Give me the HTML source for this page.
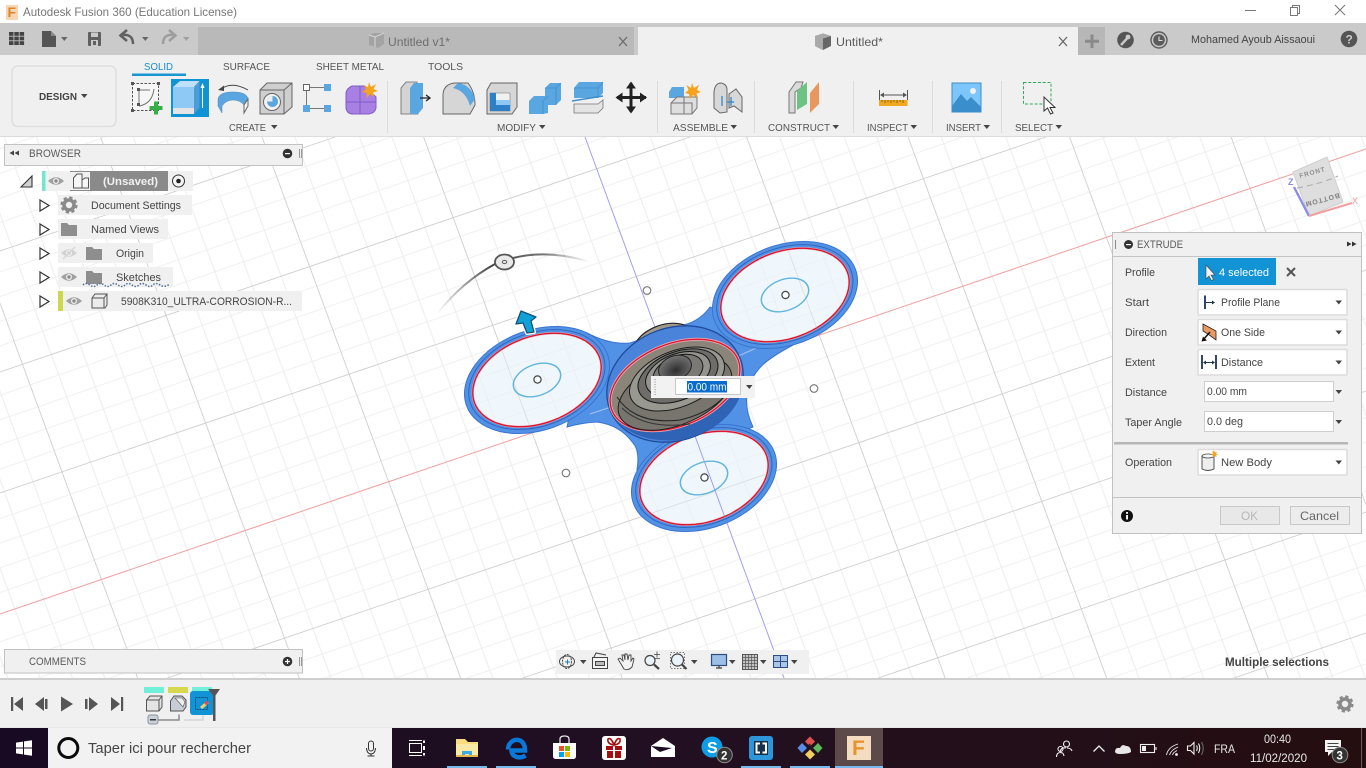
<!DOCTYPE html>
<html lang="fr"><head><meta charset="utf-8"><title>Autodesk Fusion 360</title>
<style>
html,body{margin:0;padding:0;width:1366px;height:768px;overflow:hidden;background:#fff}
svg{display:block}
text{font-family:"Liberation Sans",sans-serif;font-size:11px;fill:#555}
.w{fill:#f2f2f2}
.m{fill:#555;font-size:10.5px}
.l{fill:#5a5a5a;font-size:11px}
</style></head><body>
<svg width="1366" height="768" viewBox="0 0 1366 768" xmlns="http://www.w3.org/2000/svg">
<defs>
<pattern id="grid" patternUnits="userSpaceOnUse" width="100" height="100" patternTransform="matrix(1.435 -.495 .40 1.095 676 384)">
<path d="M20,0V100M40,0V100M60,0V100M80,0V100M0,20H100M0,40H100M0,60H100M0,80H100" stroke="#ececec" stroke-width=".65" fill="none"/>
</pattern>
<path id="maj" fill="none" stroke="#cfcfcf" stroke-width=".9" d="M0,303L138,679M100.600,137L299.500,679M262.100,137L461,679M423.600,137L622.500,679M746.600,137L945.500,679M908.100,137L1107,679M1069.600,137L1268.500,679M1231.100,137L1366,504.600M0,251L335,137M0,372L690,137M0,493L1046,137M164.500,679L1366,270M520,679L1366,391M875.400,679L1366,512M1231,679L1366,633"/>
<clipPath id="lobes">
<ellipse rx="66" ry="43" transform="translate(537 380) rotate(-20)"/>
<ellipse rx="66" ry="43" transform="translate(785 295) rotate(-20)"/>
<ellipse rx="66" ry="43" transform="translate(704 478) rotate(-20)"/>
</clipPath>
<linearGradient id="arc" gradientUnits="userSpaceOnUse" x1="437" y1="0" x2="590" y2="0">
<stop offset="0" stop-color="#555" stop-opacity="0"/><stop offset=".35" stop-color="#444"/><stop offset=".7" stop-color="#555" stop-opacity=".8"/><stop offset="1" stop-color="#777" stop-opacity="0"/>
</linearGradient>
<linearGradient id="tb" x1="0" y1="0" x2="1" y2="0"><stop offset="0" stop-color="#170a22"/><stop offset=".5" stop-color="#221022"/><stop offset="1" stop-color="#240e10"/></linearGradient>
<radialGradient id="hole" cx=".5" cy=".6" r=".6"><stop offset="0" stop-color="#2e2e2e"/><stop offset="1" stop-color="#777"/></radialGradient>
<path id="c" d="M0,0h6.5l-3.2,4z"/>
<path id="folder" d="M0,1h6l2,2h8v11H0z" fill="#8e8e8e"/>
<g id="eye"><path d="M0,5Q8,-2.5 16,5Q8,12.5 0,5z" fill="#a0a0a0"/><circle cx="8" cy="5" r="3" fill="#f0f0f0"/><circle cx="8" cy="5" r="1.7" fill="#8a8a8a"/></g>
<path id="tri" d="M0,0l9,5.5l-9,5.5z" fill="#fff" stroke="#333" stroke-width="1.2"/>
<g id="gear"><circle r="5" fill="none" stroke="#8a8a8a" stroke-width="3.6"/><circle r="7.3" fill="none" stroke="#8a8a8a" stroke-width="2.6" stroke-dasharray="3.2 2.53"/></g>
<g id="lobe">
<ellipse rx="75" ry="50" fill="#5292e6" stroke="#3a74d0" stroke-width="1"/>
<ellipse rx="70.500" ry="46.500" cy="-.5" fill="none" stroke="#3166bc" stroke-width="1"/>
<ellipse rx="66.500" ry="43.500" cy="0" fill="#eff7fd" stroke="#f0a8ae" stroke-width="2.200"/>
<ellipse rx="66.500" ry="43.500" cy="0" fill="none" stroke="#d9122e" stroke-width="1.300"/>
<ellipse rx="24.500" ry="15.500" fill="none" stroke="#62b6dc" stroke-width="1.300"/>
</g>
</defs>

<!-- viewport -->
<rect x="0" y="137" width="1366" height="542" fill="#fff"/>
<rect x="0" y="137" width="1366" height="542" fill="url(#grid)"/>
<use href="#maj"/>
<path d="M0,614L1366,149" stroke="#f0a0a0" stroke-width="1"/>
<path d="M585,137L784,678" stroke="#a0a0ee" stroke-width="1"/>

<!-- spinner body -->
<path d="M587,333Q610,345 630,343L690,323Q702,318 710,307L793,345Q765,360 758,370Q738,395 753,427L637,470Q640,450 633,443Q620,425 597,422Q580,423 567,427z" fill="#5292e6" stroke="#3a74d0" stroke-width="1"/>
<path d="M590,414L620,404M736,357L770,342" stroke="#a4c4f0" stroke-width="1"/>
<!-- bearing top -->
<ellipse cx="664" cy="345" rx="32" ry="20" transform="rotate(-20 664 345)" fill="#a09a8c" stroke="#222" stroke-width="1.200"/>
<use href="#lobe" transform="translate(537 380) rotate(-20)"/>
<use href="#lobe" transform="translate(785 295) rotate(-20)"/>
<use href="#lobe" transform="translate(704 478) rotate(-20)"/>
<g clip-path="url(#lobes)">
<rect x="430" y="230" width="440" height="310" fill="url(#grid)" opacity=".7"/>
<use href="#maj" opacity=".6"/>
<path d="M0,614L1366,149" stroke="#f0a0a0" stroke-width="1" opacity=".7"/>
<path d="M585,137L784,678" stroke="#a0a0ee" stroke-width="1"/>
</g>
<g fill="none" stroke="#62b6dc" stroke-width="1.300"><ellipse rx="24.500" ry="15.500" transform="translate(537 380) rotate(-20)"/><ellipse rx="24.500" ry="15.500" transform="translate(785 295) rotate(-20)"/><ellipse rx="24.500" ry="15.500" transform="translate(704 478) rotate(-20)"/></g>
<!-- center hub -->
<ellipse cx="675" cy="384" rx="70" ry="56" transform="rotate(-22 675 384)" fill="#4a84da" stroke="#1f4c9c" stroke-width="1.300"/>
<path d="M612,414Q632,444 680,440Q728,430 742,392L740,385Q700,428 640,428z" fill="#2e63b6"/>
<ellipse cx="675" cy="385" rx="68" ry="41" transform="rotate(-22 675 385)" fill="#8a8578" stroke="#eaa8b0" stroke-width="3"/>
<ellipse cx="675" cy="385" rx="68" ry="41" transform="rotate(-22 675 385)" fill="none" stroke="#d9122e" stroke-width="1.300"/>
<ellipse cx="675" cy="393" rx="60" ry="32" transform="rotate(-22 675 393)" fill="#77756e" stroke="#1e1e1e" stroke-width="1"/>
<ellipse cx="677" cy="379" rx="50" ry="28" transform="rotate(-22 677 379)" fill="#999890" stroke="#1a1a1a" stroke-width="1"/>
<ellipse cx="678" cy="376" rx="42" ry="24" transform="rotate(-22 678 376)" fill="#6e6d69" stroke="#151515" stroke-width="1"/>
<ellipse cx="678" cy="374" rx="34" ry="20" transform="rotate(-22 678 374)" fill="#94938e" stroke="#151515" stroke-width="1"/>
<ellipse cx="678" cy="372" rx="26" ry="16" transform="rotate(-22 678 372)" fill="#7a7976" stroke="#151515" stroke-width="1"/>
<ellipse cx="675" cy="368" rx="17" ry="12" transform="rotate(-22 675 368)" fill="url(#hole)" stroke="#222" stroke-width="1"/>
<path d="M617,397Q635,425 680,420Q722,410 735,380" fill="none" stroke="#222" stroke-width="1"/>
<path d="M622,408Q645,430 690,424" fill="none" stroke="#333" stroke-width="1"/>
<!-- lobe centres -->
<g fill="#fff" fill-opacity=".7" stroke="#444" stroke-width="1.200"><circle cx="537.500" cy="379.500" r="3.600"/><circle cx="785.500" cy="295" r="3.600"/><circle cx="704.500" cy="477.500" r="3.600"/></g>
<g fill="#fff" stroke="#777" stroke-width="1.100"><circle cx="647" cy="290.500" r="3.800"/><circle cx="814" cy="388.500" r="3.800"/><circle cx="566" cy="473" r="3.800"/></g>
<!-- manipulators -->
<path d="M437,314Q462,282 495,264M513,258Q548,249 590,262" fill="none" stroke="url(#arc)" stroke-width="2"/>
<ellipse cx="504.500" cy="262" rx="9.500" ry="7.500" fill="#e9e9e9" stroke="#555" stroke-width="1.800"/>
<ellipse cx="504.500" cy="262" rx="2.200" ry="1.600" fill="none" stroke="#555" stroke-width="1"/>
<path d="M521,311L536,317L531,321L534,332L527,333L523,323L516,324z" fill="#0fa0d8" stroke="#fff" stroke-width="4" stroke-linejoin="round"/>
<path d="M521,311L536,317L531,321L534,332L527,333L523,323L516,324z" fill="#0fa0d8" stroke="#14506e" stroke-width="1.300" stroke-linejoin="round"/>
<!-- inline input -->
<rect x="651" y="376" width="104" height="22" fill="#f2f2f2"/>
<path d="M655,379V396" stroke="#bbb" stroke-dasharray="1 1.500" stroke-width="2"/>
<rect x="675.500" y="378.500" width="65" height="16" fill="#fff" stroke="#c8c8c8"/>
<rect x="687" y="381" width="40" height="11.500" fill="#0a6ccc"/>
<text x="687.500" y="390.500" style="fill:#fff;font-size:11px" textLength="39" lengthAdjust="spacingAndGlyphs">0.00 mm</text>
<use href="#c" x="746" y="385" fill="#444"/>

<!-- viewcube -->
<path d="M1293,172L1327,157L1343,202L1309,216z" fill="#dedede" stroke="#cfcfcf"/>
<path d="M1297,188Q1320,184 1338,176" stroke="#aaa" stroke-width="1" fill="none" stroke-dasharray="6 4"/>
<text transform="translate(1300 178) rotate(-15)" style="font-size:6.500px;font-weight:bold;fill:#8e8e8e" textLength="26">FRONT</text>
<text transform="translate(1339 193) rotate(165)" style="font-size:7px;font-weight:bold;fill:#808080" textLength="35">BOTTOM</text>
<path d="M1294,187L1309,216" stroke="#8c8cea" stroke-width="2.400"/>
<path d="M1309,216L1352,203" stroke="#f0a0a0" stroke-width="2"/>
<text x="1288" y="185" style="font-size:9px;font-weight:bold;fill:#8a8ae8">Z</text>
<text x="1352" y="204" style="font-size:9px;fill:#f09a9a">X</text>

<!-- title bar -->
<rect x="0" y="0" width="1366" height="23" fill="#fff"/>
<rect x="6" y="5" width="12" height="15" fill="#f6d6b4"/>
<text x="7.500" y="17" style="font-size:14px;font-weight:bold;fill:#e0852a">F</text>
<text x="23" y="16" style="font-size:12px;fill:#777" textLength="214" lengthAdjust="spacingAndGlyphs">Autodesk Fusion 360 (Education License)</text>
<path d="M1245,10.500H1256" stroke="#777"/>
<path d="M1290.500,7.500h7v8h-7zM1292.500,7.500v-2h7v8h-2" fill="none" stroke="#777"/>
<path d="M1335,5L1345,15M1345,5L1335,15" stroke="#777"/>

<!-- tab bar -->
<rect x="0" y="23" width="1366" height="32" fill="#cacaca"/>
<rect x="198" y="27" width="436" height="28" fill="#b9b9b9"/>
<rect x="638" y="27" width="440" height="28" fill="#f0f0f0"/>
<rect x="1078" y="27" width="27" height="28" fill="#b7b7b7"/>
<g fill="#444"><rect x="9" y="32" width="4.500" height="3.800"/><rect x="14.300" y="32" width="4.500" height="3.800"/><rect x="19.600" y="32" width="4.500" height="3.800"/><rect x="9" y="36.600" width="4.500" height="3.800"/><rect x="14.300" y="36.600" width="4.500" height="3.800"/><rect x="19.600" y="36.600" width="4.500" height="3.800"/><rect x="9" y="41.200" width="4.500" height="3.800"/><rect x="14.300" y="41.200" width="4.500" height="3.800"/><rect x="19.600" y="41.200" width="4.500" height="3.800"/></g>
<path d="M42,31h9l5,5v11H42z" fill="#555"/><path d="M51,31v5h5" fill="#8a8a8a"/>
<use href="#c" x="61" y="37" fill="#666"/>
<rect x="88" y="32" width="13" height="14" rx="1" fill="#606060"/><rect x="91" y="32.500" width="7" height="4.500" fill="#cacaca"/><rect x="91" y="40" width="7" height="6" fill="#cacaca"/><rect x="93" y="41" width="3" height="4" fill="#606060"/>
<path d="M133,44Q133,34 123,35" fill="none" stroke="#606060" stroke-width="2.500"/><path d="M127,30L120.500,35.500L127,41" fill="none" stroke="#606060" stroke-width="2.500"/>
<use href="#c" x="142" y="37" fill="#666"/>
<path d="M163,44Q163,34 173,35" fill="none" stroke="#9d9d9d" stroke-width="2.500"/><path d="M169,30L175.500,35.500L169,41" fill="none" stroke="#9d9d9d" stroke-width="2.500"/>
<use href="#c" x="183" y="37" fill="#a0a0a0"/>
<path d="M369,35l5,-2l10,0l0,11l-6,4l-9,-3z" fill="#a3a3a3"/><path d="M369,35l6,2l9,-4M375,37v10" stroke="#d8d8d8" fill="none"/>
<text x="388" y="46" style="font-size:12px;fill:#6d6d6d" textLength="62" lengthAdjust="spacingAndGlyphs">Untitled v1*</text>
<path d="M619,37L627,46M627,37L619,46" stroke="#6a6a6a" stroke-width="1.300"/>
<path d="M815,36l8,-2.500l8,2.500v10l-8,4l-8,-4z" fill="#666"/><path d="M815,36l8,2.500l8,-2.500v0l-8,-2.500zM815,36v10l8,4v-11.500z" fill="#a9a9a9"/>
<text x="836" y="46" style="font-size:12px;fill:#5a5a5a" textLength="47" lengthAdjust="spacingAndGlyphs">Untitled*</text>
<path d="M1059,37L1067,46M1067,37L1059,46" stroke="#666" stroke-width="1.300"/>
<path d="M1092,34.500V48M1085,41.200H1099" stroke="#8a8a8a" stroke-width="3"/>
<circle cx="1125.500" cy="40" r="8.300" fill="#555"/><path d="M1121,45L1127,38.500" stroke="#cacaca" stroke-width="2.400"/><circle cx="1128" cy="37" r="2.400" fill="#cacaca"/>
<circle cx="1159" cy="40" r="8" fill="#cacaca" stroke="#5c5c5c" stroke-width="1.400"/><circle cx="1159" cy="40" r="5.800" fill="#5c5c5c"/><path d="M1159,36.500V40.500H1162.500" stroke="#ddd" stroke-width="1.100" fill="none"/>
<text x="1191" y="43" style="font-size:11px;fill:#444" textLength="124" lengthAdjust="spacingAndGlyphs">Mohamed Ayoub Aissaoui</text>
<circle cx="1349" cy="39" r="8.300" fill="#555"/><text x="1345.500" y="43.500" style="font-size:12px;font-weight:bold;fill:#cacaca">?</text>

<!-- toolbar -->
<rect x="0" y="55" width="1366" height="82" fill="#f0f0f0"/>
<path d="M0,136.500H1366" stroke="#dcdcdc"/>
<rect x="12" y="66" width="104" height="60.500" rx="6" fill="#f0f0f0" stroke="#dedede" stroke-width="1.500"/>
<text x="39" y="100" style="font-size:10.500px;font-weight:bold;fill:#444" textLength="38" lengthAdjust="spacingAndGlyphs">DESIGN</text>
<use href="#c" x="81" y="94" fill="#444"/>
<text x="144" y="70" style="font-size:10.500px;fill:#1a8ecb" textLength="29" lengthAdjust="spacingAndGlyphs">SOLID</text>
<rect x="132" y="73.500" width="54" height="2.500" fill="#1796d2"/>
<text x="223" y="70" class="m" textLength="47" lengthAdjust="spacingAndGlyphs">SURFACE</text>
<text x="316" y="70" class="m" textLength="68" lengthAdjust="spacingAndGlyphs">SHEET METAL</text>
<text x="428" y="70" class="m" textLength="35" lengthAdjust="spacingAndGlyphs">TOOLS</text>
<g stroke="#dcdcdc"><path d="M387.500,81V133M657.500,81V133M754.500,81V133M853.500,81V133M932.500,81V133M1001.500,81V133"/></g>
<g class="lbls">
<text x="229" y="131" class="m" textLength="37" lengthAdjust="spacingAndGlyphs">CREATE</text><use href="#c" x="271" y="125" fill="#444"/>
<text x="497" y="131" class="m" textLength="39" lengthAdjust="spacingAndGlyphs">MODIFY</text><use href="#c" x="539" y="125" fill="#444"/>
<text x="673" y="131" class="m" textLength="55" lengthAdjust="spacingAndGlyphs">ASSEMBLE</text><use href="#c" x="730.500" y="125" fill="#444"/>
<text x="768" y="131" class="m" textLength="62" lengthAdjust="spacingAndGlyphs">CONSTRUCT</text><use href="#c" x="832.500" y="125" fill="#444"/>
<text x="867" y="131" class="m" textLength="41" lengthAdjust="spacingAndGlyphs">INSPECT</text><use href="#c" x="910.500" y="125" fill="#444"/>
<text x="946" y="131" class="m" textLength="35" lengthAdjust="spacingAndGlyphs">INSERT</text><use href="#c" x="983.500" y="125" fill="#444"/>
<text x="1015" y="131" class="m" textLength="38" lengthAdjust="spacingAndGlyphs">SELECT</text><use href="#c" x="1055.500" y="125" fill="#444"/>
</g>
<!-- sketch icon -->
<rect x="132.500" y="83.500" width="26" height="27" fill="#f6f6f6" stroke="#555" stroke-dasharray="2.500 1.500"/>
<path d="M139,106Q152,104 154,89M139,90H150M139,90V105" fill="none" stroke="#777"/>
<g fill="#555"><rect x="131" y="82" width="3" height="3"/><rect x="157" y="82" width="3" height="3"/><rect x="131" y="109" width="3" height="3"/><rect x="137" y="88" width="3" height="3"/><rect x="137" y="103" width="3" height="3"/></g>
<path d="M156,101.500V114.500M149.500,108H162.500" stroke="#35b048" stroke-width="4"/>
<!-- extrude -->
<rect x="171" y="79" width="38" height="38" fill="#0f93d4"/>
<path d="M173,87L180,81H199.500L194,87z" fill="#bfe0fa"/>
<path d="M173,87H194V108H173z" fill="#8ec9f6"/>
<path d="M173,108H194V114H173z" fill="#e4e4e4"/>
<path d="M194,87L199.500,81V108L194,114z" fill="#4f9bd8"/>
<path d="M202.500,108V86" stroke="#fff"/><path d="M200.500,88L202.500,83L204.500,88z" fill="#fff"/>
<!-- revolve -->
<path d="M218,106V99Q219,92 233,92Q247,92 248,99V106L244,113V105Q240,100 233,100Q226,100 222,106V113z" fill="#5aa6e0" stroke="#4787bb" stroke-width=".5"/>
<path d="M244,105L248,99V106L244,113z" fill="#f4f4f4" stroke="#666"/>
<path d="M221,89Q232,81 248,90" fill="none" stroke="#444"/><path d="M218,90L224,85.500V91z" fill="#444"/>
<!-- hole -->
<path d="M260,90L267,83H292V107L284,114H260z" fill="#cfcfcf" stroke="#666"/>
<path d="M260,90H284V114M284,90L292,83" fill="none" stroke="#666"/>
<circle cx="272" cy="102" r="8.500" fill="#f2f2f2" stroke="#666"/><circle cx="272.500" cy="101.500" r="5.500" fill="#5aa6e0"/><path d="M272.500,101.500V96A5.500,5.500 0 0,0 267,101.500z" fill="#eee"/>
<!-- pattern -->
<path d="M310,87.500H324M306.500,91V105M310,108.500H324" stroke="#777"/>
<rect x="303.500" y="84.500" width="6" height="6" fill="#fff" stroke="#666"/>
<g fill="#5aa6e0"><rect x="324" y="84" width="7" height="7"/><rect x="303" y="105" width="7" height="7"/><rect x="324" y="105" width="7" height="7"/></g>
<!-- purple -->
<path d="M346,93Q347,88 352,86L364,86L376,97V108Q375,113 369,114H353Q347,114 346,108z" fill="#a87fe3" stroke="#7f5cc4"/>
<path d="M360,86V114M346,102H376" stroke="#7f5cc4"/>
<path d="M369,82L371,87L376,84L373.500,89L378,91L373,92.500L374.500,97L370,94L367,98L366.500,93L362,92L366,89L363.500,85L368,87z" fill="#f6a21c"/>
<!-- press pull -->
<path d="M401,114V88L406,82H417L418,114z" fill="#d4d4d4" stroke="#666" stroke-width=".8"/>
<path d="M410,114V88L414,83H423V108L418,114z" fill="#5aa6e0"/>
<path d="M420,98H429M426,95L430,98L426,101" fill="none" stroke="#222" stroke-width="1.300"/>
<!-- fillet -->
<path d="M443,114V94Q444,84 455,83L468,83Q475,92 475,105L470,114z" fill="#d6d6d6" stroke="#666"/>
<path d="M458,83Q471,85 475,99L470,106Q466,91 453,88z" fill="#5aa6e0"/>
<!-- shell -->
<path d="M487,90L491,83H517V107L512,114H487z" fill="#d6d6d6" stroke="#666"/>
<path d="M490,93H510V111H490z" fill="#f1f1f1" stroke="#666" stroke-width=".5"/>
<path d="M490,93h6v12h14v6H490z" fill="#2e7fc6"/><path d="M496,100h14v5H496z" fill="#8ec9f6"/>
<!-- combine -->
<path d="M545,88L550,83H561V100L556,105H545z" fill="#5aa6e0"/><path d="M529,101L534,96H548V113L543,114H529z" fill="#5aa6e0"/><path d="M545,88H556V105M556,88L561,83" fill="none" stroke="#3f8fce" stroke-width=".8"/>
<path d="M543,101V114M543,101L548,96" fill="none" stroke="#3f8fce" stroke-width=".8"/>
<!-- split -->
<path d="M574,88L579,82H603V93L598,98H574z" fill="#5aa6e0"/><path d="M574,88H598V98M598,88L603,82" fill="none" stroke="#3f8fce" stroke-width=".7"/>
<path d="M572,101L603,96" stroke="#3f8fce" stroke-width="1.600"/>
<path d="M574,104H598L603,100V108L598,113H574z" fill="#e4e4e4" stroke="#777" stroke-width=".8"/>
<!-- move -->
<path d="M631,83V112M617,97.500H646" stroke="#222" stroke-width="3"/>
<path d="M631,81.500L636,88.500H626zM631,113.500L636,106.500H626zM615.500,97.500L622.500,92.500V102.500zM647,97.500L640,92.500V102.500z" fill="#222"/>
<!-- assemble -->
<path d="M669,92L672,87H684V98H669z" fill="#5aa6e0"/>
<path d="M671,103L677,97H697V108L692,114H671z" fill="#dedede" stroke="#777"/>
<path d="M684,97V114M671,103H692V114" fill="none" stroke="#777"/>
<path d="M692,83L694,88L699,85L697,90L701,92L696.500,93.500L698,98L693,95L690,99L689,94L685,93L688.500,90L686.500,85L691,88z" fill="#f6a21c"/>
<!-- joint -->
<path d="M714,108V92Q715,83 721,83Q727,84 727,90V112L720,113z" fill="#d8d8d8" stroke="#666"/>
<path d="M729,94L736,89L742,97V112L734,106L729,108z" fill="#d8d8d8" stroke="#666"/>
<path d="M722,96V106M731,97V106M727,102H734" stroke="#3f8fce" stroke-width="1.400"/>
<!-- construct -->
<path d="M789,113V92L796,82H803L801,88L795,92V113z" fill="#dadada" stroke="#777"/>
<path d="M797,110V91L807,82V104z" fill="#6cc382"/>
<path d="M810,113V93L819,82V104z" fill="#e8985e"/>
<!-- inspect -->
<path d="M879.500,90V100M907.500,90V100M881,95H906" stroke="#555"/><path d="M880,95l4,-2.500v5zM907,95l-4,-2.500v5z" fill="#555"/>
<rect x="879" y="100" width="28.500" height="6" fill="#f0a820"/>
<path d="M882,100v2M885,100v3M888,100v2M891,100v3M894,100v2M897,100v3M900,100v2M903,100v3" stroke="#8a6010"/>
<!-- insert -->
<rect x="952" y="83" width="29" height="29" fill="#7cc6fb" stroke="#3e8cc6"/>
<circle cx="973" cy="91" r="3" fill="#f2f2f0"/>
<path d="M952,106L961,94L967,101L971,97L981,107V112H952z" fill="#3a8ecc"/>
<!-- select -->
<rect x="1023.500" y="82.500" width="27.500" height="21.500" fill="none" stroke="#2eaa55" stroke-dasharray="3 1.800"/>
<path d="M1044,97V111L1047.500,108L1050.500,114L1053,113L1050,107.500H1055z" fill="#fff" stroke="#333"/>

<!-- browser -->
<rect x="4.500" y="144.500" width="298" height="21" fill="#f0f0f0" stroke="#c2c2c2"/>
<path d="M14,150.500v5l-4.500,-2.500zM19,150.500v5l-4.500,-2.500z" fill="#444"/>
<text x="29" y="157" class="l" textLength="52" lengthAdjust="spacingAndGlyphs">BROWSER</text>
<circle cx="287.500" cy="153.500" r="4.800" fill="#333"/><rect x="285" y="153" width="5" height="1.200" fill="#fff"/>
<path d="M299.500,149V158M301.500,149V158" stroke="#999"/>
<!-- tree -->
<rect x="42" y="171" width="151" height="20" fill="#f0f0f0"/>
<rect x="42" y="171" width="3.500" height="20" fill="#74e6cf"/>
<rect x="70" y="171" width="98" height="20" fill="#8a8a8a"/>
<rect x="70" y="172" width="20" height="18" fill="#f0f0f0"/>
<path d="M21,187L32,176V187z" fill="#d0d0d0" stroke="#333" stroke-width="1.100"/>
<use href="#eye" x="48" y="176"/>
<path d="M73.500,188V178L77,174H82V188zM82,188V180L85,178H88.500V188z" fill="#f6f6f6" stroke="#555"/>
<text x="103" y="185" style="font-size:11px;font-weight:bold;fill:#f2f2f2" textLength="55" lengthAdjust="spacingAndGlyphs">(Unsaved)</text>
<circle cx="178.500" cy="181" r="6" fill="#f4f4f4" stroke="#333"/><circle cx="178.500" cy="181" r="2.300" fill="#222"/>
<rect x="58" y="195" width="134" height="20" fill="#f0f0f0"/>
<use href="#tri" x="40" y="200"/>
<use href="#gear" x="69" y="205"/>
<text x="91" y="209" style="font-size:11px;fill:#444" textLength="90" lengthAdjust="spacingAndGlyphs">Document Settings</text>
<rect x="58" y="219" width="110" height="20" fill="#f0f0f0"/>
<use href="#tri" x="40" y="224"/>
<use href="#folder" x="61" y="222"/>
<text x="91" y="233" style="font-size:11px;fill:#444" textLength="68" lengthAdjust="spacingAndGlyphs">Named Views</text>
<rect x="58" y="243" width="95" height="20" fill="#f0f0f0"/>
<use href="#tri" x="40" y="248"/>
<g opacity=".35"><use href="#eye" x="61" y="248"/><path d="M63,259L75,247" stroke="#aaa" stroke-width="1.500"/></g>
<use href="#folder" x="86" y="246"/>
<text x="116" y="257" style="font-size:11px;fill:#444" textLength="28" lengthAdjust="spacingAndGlyphs">Origin</text>
<rect x="58" y="267" width="115" height="20" fill="#f0f0f0"/>
<use href="#tri" x="40" y="272"/>
<use href="#eye" x="61" y="272"/>
<use href="#folder" x="86" y="270"/>
<text x="116" y="281" style="font-size:11px;fill:#444" textLength="45" lengthAdjust="spacingAndGlyphs">Sketches</text>
<path d="M83,285Q86,282 90,285T97,285T104,285T111,285T118,285T125,285T132,285T139,285T146,285T153,285T160,285T170,284" fill="none" stroke="#4f6f96" stroke-width="1.500" stroke-dasharray="1.500 1.500"/>
<rect x="58" y="291" width="244" height="20" fill="#f0f0f0"/>
<rect x="58" y="291" width="5" height="20" fill="#ccd84c"/>
<use href="#tri" x="40" y="296"/>
<use href="#eye" x="66" y="296"/>
<path d="M92,298L95,294H107V305L105,308H92z" fill="#ececec" stroke="#555"/><path d="M92,298H104V308M104,298L107,294" fill="none" stroke="#555"/>
<text x="121" y="305" style="font-size:11px;fill:#444" textLength="171" lengthAdjust="spacingAndGlyphs">5908K310_ULTRA-CORROSION-R...</text>

<!-- comments -->
<rect x="4.500" y="649.500" width="298" height="23.500" fill="#f0f0f0" stroke="#c2c2c2"/>
<text x="29" y="665" class="l" textLength="57" lengthAdjust="spacingAndGlyphs">COMMENTS</text>
<circle cx="287.500" cy="661.500" r="4.800" fill="#333"/><path d="M285,661.500H290M287.500,659V664" stroke="#fff" stroke-width="1.200"/>
<path d="M299.500,657V666M301.500,657V666" stroke="#999"/>

<!-- nav bar -->
<rect x="556" y="650" width="253" height="24" fill="#f0f0f0"/>
<ellipse cx="567" cy="661.500" rx="7.500" ry="5.500" fill="none" stroke="#444"/><ellipse cx="567" cy="661.500" rx="4.500" ry="7" fill="none" stroke="#444" stroke-dasharray="2 1"/><path d="M565,662h5M567.500,659.500v5" stroke="#2277cc"/>
<use href="#c" x="580" y="660" fill="#444"/>
<rect x="592.500" y="657.500" width="15" height="11" fill="#f4f4f4" stroke="#444"/><rect x="595.500" y="661.500" width="9" height="4" fill="#bbb" stroke="#444"/><path d="M594,657L596,653L606,655" fill="none" stroke="#444"/>
<path d="M621,664L618,659L620,658L623,661L622,655L624,655L625,660V654H627L628,660L629,655H631L631,661L633,658L634,659L632,667Q628,671 624,669z" fill="#f4f4f4" stroke="#444" stroke-width=".9"/>
<circle cx="650" cy="660.500" r="5" fill="#eaf3fa" stroke="#444" stroke-width="1.200"/><path d="M654,664.500L659,669" stroke="#444" stroke-width="2.200"/><path d="M654,654.500h6M657,651.500v6M654,658.500h6" stroke="#444" stroke-width=".8"/>
<rect x="670.500" y="652.500" width="14" height="16" fill="none" stroke="#777" stroke-dasharray="1.500 1.500"/><circle cx="677.500" cy="660" r="6" fill="#eaf3fa" stroke="#444" stroke-width="1.200"/><path d="M682,664.500L686.500,669" stroke="#444" stroke-width="2.200"/>
<use href="#c" x="691" y="660" fill="#444"/>
<rect x="711.500" y="654.500" width="15" height="11" fill="#9bbfe6" stroke="#2d4f80" stroke-width="1.200"/><path d="M716,668H722M719,666V668" stroke="#555" stroke-width="1.500"/>
<use href="#c" x="729" y="660" fill="#444"/>
<rect x="742.500" y="654.500" width="15" height="15" fill="#c4c4c4" stroke="#555"/><path d="M745.500,654.500V669.500M748.500,654.500V669.500M751.500,654.500V669.500M754.500,654.500V669.500M742.500,657.500H757.500M742.500,660.500H757.500M742.500,663.500H757.500M742.500,666.500H757.500" stroke="#555" stroke-width=".7"/>
<use href="#c" x="760" y="660" fill="#444"/>
<rect x="773.500" y="655.500" width="14" height="12" fill="#a9c6ea" stroke="#2d4f80"/><path d="M780.500,655.500V667.500M773.500,661.500H787.500" stroke="#2d4f80"/>
<use href="#c" x="791" y="660" fill="#444"/>

<text x="1225" y="666" style="font-size:11.500px;font-weight:bold;fill:#444" textLength="104" lengthAdjust="spacingAndGlyphs">Multiple selections</text>

<!-- extrude panel -->
<rect x="1112.500" y="232.500" width="249" height="301" fill="#f0f0f0" stroke="#c0c0c0"/>
<path d="M1113,256.500H1361M1113,497.500H1361" stroke="#c4c4c4"/>
<path d="M1115.500,240V249" stroke="#888"/>
<circle cx="1128.500" cy="244.500" r="4.500" fill="#333"/><rect x="1126" y="244" width="5" height="1.200" fill="#fff"/>
<text x="1137" y="248" class="l" textLength="46" lengthAdjust="spacingAndGlyphs">EXTRUDE</text>
<path d="M1347,241.500v5l4.500,-2.500zM1352,241.500v5l4.500,-2.500z" fill="#333"/>
<g style="font-size:11px">
<text x="1125" y="276" style="fill:#444" textLength="30" lengthAdjust="spacingAndGlyphs">Profile</text>
<text x="1125" y="306" style="fill:#444" textLength="24" lengthAdjust="spacingAndGlyphs">Start</text>
<text x="1125" y="336" style="fill:#444" textLength="42" lengthAdjust="spacingAndGlyphs">Direction</text>
<text x="1125" y="366" style="fill:#444" textLength="30" lengthAdjust="spacingAndGlyphs">Extent</text>
<text x="1125" y="396" style="fill:#444" textLength="42" lengthAdjust="spacingAndGlyphs">Distance</text>
<text x="1125" y="426" style="fill:#444" textLength="57" lengthAdjust="spacingAndGlyphs">Taper Angle</text>
<text x="1125" y="466" style="fill:#444" textLength="47" lengthAdjust="spacingAndGlyphs">Operation</text>
</g>
<rect x="1198" y="258" width="78" height="27" fill="#1193d5"/>
<path d="M1206,265V279L1209,276L1211.500,280.500L1213.500,279.500L1211,275H1215z" fill="#f4f4f4" stroke="#444" stroke-width=".6"/>
<text x="1219" y="276" style="font-size:11px;fill:#fff" textLength="50" lengthAdjust="spacingAndGlyphs">4 selected</text>
<path d="M1287,268L1295,276M1295,268L1287,276" stroke="#555" stroke-width="2"/>
<g fill="#fff" stroke="#dcdcdc" stroke-width="1.500">
<rect x="1198" y="289.500" width="149" height="25.500" rx="1"/><rect x="1198" y="319.500" width="149" height="25.500" rx="1"/><rect x="1198" y="349.500" width="149" height="25.500" rx="1"/><rect x="1198" y="449.500" width="149" height="25.500" rx="1"/>
</g>
<g fill="#fff" stroke="#cfcfcf"><rect x="1204.500" y="381.500" width="129" height="20"/><rect x="1204.500" y="411.500" width="129" height="20"/></g>
<path d="M1205,295.500V309" stroke="#1c3358" stroke-width="1.800"/><path d="M1206,302.500H1214" stroke="#1c3358"/><path d="M1215,302.500l-3,-2v4z" fill="#1c3358"/>
<text x="1221" y="306" style="font-size:11px;fill:#444" textLength="59" lengthAdjust="spacingAndGlyphs">Profile Plane</text>
<path d="M1203,324L1216,331L1216,340L1208,334L1203,331z" fill="#e89a60" stroke="#222" stroke-width=".8"/><path d="M1210,332L1203,340" stroke="#111" stroke-width="1.500"/><path d="M1201.500,341.500L1207,340.500L1203,336.500z" fill="#111"/>
<text x="1221" y="336" style="font-size:11px;fill:#444" textLength="44" lengthAdjust="spacingAndGlyphs">One Side</text>
<path d="M1202,355V369M1216,355V369" stroke="#1c3358" stroke-width="1.800"/><path d="M1204,362.500H1214" stroke="#1c3358"/><path d="M1203,362.500l3,-2v4zM1215,362.500l-3,-2v4z" fill="#1c3358"/>
<text x="1221" y="366" style="font-size:11px;fill:#444" textLength="42" lengthAdjust="spacingAndGlyphs">Distance</text>
<text x="1207" y="395" style="font-size:11px;fill:#444" textLength="40" lengthAdjust="spacingAndGlyphs">0.00 mm</text>
<text x="1207" y="425" style="font-size:11px;fill:#444" textLength="36" lengthAdjust="spacingAndGlyphs">0.0 deg</text>
<rect x="1114" y="442" width="234" height="2.500" fill="#b6b6b6"/>
<path d="M1202,456H1214V469Q1208,472 1202,469z" fill="#eee" stroke="#444" stroke-width=".9"/><ellipse cx="1208" cy="456" rx="6" ry="2" fill="#f8f8f8" stroke="#444" stroke-width=".8"/><path d="M1214,450.500l1,2l2,-1l-1,2l2,1l-2,.5l.5,2l-2,-1l-1.500,1.500l0,-2l-2,-1l2,-1l-.5,-2z" fill="#f6a21c"/>
<text x="1221" y="466" style="font-size:11px;fill:#444" textLength="51" lengthAdjust="spacingAndGlyphs">New Body</text>
<g fill="#444"><use href="#c" x="1335.500" y="300.500"/><use href="#c" x="1335.500" y="330.500"/><use href="#c" x="1335.500" y="360.500"/><use href="#c" x="1335.500" y="390"/><use href="#c" x="1335.500" y="420"/><use href="#c" x="1335.500" y="460.500"/></g>
<circle cx="1127" cy="516" r="6" fill="#111"/><rect x="1126.100" y="515" width="1.900" height="4.500" fill="#fff"/><rect x="1126.100" y="512" width="1.900" height="1.800" fill="#fff"/>
<rect x="1220.500" y="506.500" width="59" height="18" fill="#e8e8e8" stroke="#c8c8c8"/>
<text x="1241" y="520" style="font-size:12px;fill:#b8b8b8" textLength="17" lengthAdjust="spacingAndGlyphs">OK</text>
<rect x="1290.500" y="506.500" width="59" height="18" fill="#ececec" stroke="#c8c8c8"/>
<text x="1300" y="520" style="font-size:12px;fill:#666" textLength="39" lengthAdjust="spacingAndGlyphs">Cancel</text>

<!-- timeline -->
<rect x="0" y="678" width="1366" height="50" fill="#f0f0f0"/>
<rect x="0" y="678" width="1366" height="2" fill="#cfcfcf"/>
<rect x="0" y="727.500" width="1366" height="1" fill="#ddd"/>
<g fill="#555">
<rect x="11" y="697" width="2.200" height="14"/><path d="M23,697V711L14,704z"/>
<path d="M44,697V711L35,704z"/><rect x="45" y="699" width="2.500" height="10"/>
<path d="M61,696.500V711.500L73,704z"/>
<rect x="85" y="699" width="2.500" height="10"/><path d="M89,697V711L98,704z"/>
<path d="M111,697V711L120,704z"/><rect x="121" y="697" width="2.200" height="14"/>
</g>
<rect x="144" y="687" width="20" height="6" fill="#70f0d8"/>
<rect x="168" y="687" width="20" height="6" fill="#d6d84e"/>
<rect x="192" y="687" width="20" height="6" fill="#70f0d8"/>
<path d="M146.500,700L150,696H162V707L159,711H146.500z" fill="#e4e4e4" stroke="#555"/><path d="M146.500,700H159V711M159,700L162,696" fill="none" stroke="#555"/>
<path d="M170.500,701L174,696H182L186,700V707L183,711H170.500z" fill="#c8ccd4" stroke="#555"/><path d="M175,698H182L185,702L183,707Z" fill="#eee" stroke="#555" stroke-width=".6"/>
<rect x="190" y="691" width="24" height="24" rx="3" fill="#1193d5"/>
<rect x="195.500" y="697.500" width="12" height="12" fill="none" stroke="#14507c" stroke-dasharray="2 1"/>
<path d="M201,708L208,702" stroke="#f0d070" stroke-width="3"/><path d="M205,704L208,702" stroke="#e05050" stroke-width="3"/>
<path d="M208,689H220L215.500,695.500V721H213V695.500z" fill="#555"/>
<rect x="148" y="715" width="10" height="9" rx="2" fill="#ccd0d8" stroke="#8a94a4"/><rect x="150" y="719" width="6" height="1.500" fill="#333"/>
<path d="M158,720H179V714.500" fill="none" stroke="#8a8a8a" stroke-width="1.500"/>
<path d="M184,720H203V715" fill="none" stroke="#d6d6d6" stroke-width="1.500"/>
<use href="#gear" x="1345" y="704"/>

<!-- taskbar -->
<rect x="0" y="728" width="1366" height="40" fill="url(#tb)"/>
<path d="M16,742.600L23,741.600V747.500H16zM24,741.400L32,740.200V747.500H24zM16,748.500H23V754.400L16,753.400zM24,748.500H32V755.800L24,754.600z" fill="#fff"/>
<rect x="48" y="728" width="344" height="40" fill="#f2f2f2"/>
<circle cx="68.300" cy="748" r="9.500" fill="none" stroke="#0a0a0a" stroke-width="3"/>
<text x="88" y="753" style="font-size:14.500px;fill:#444" textLength="163" lengthAdjust="spacingAndGlyphs">Taper ici pour rechercher</text>
<rect x="368.500" y="741" width="5" height="10" rx="2.500" fill="none" stroke="#333"/><path d="M366.500,748Q367,754 371,754Q375,754 375.500,748M371,754V756M367.500,756H374.500" fill="none" stroke="#333"/>
<!-- task view -->
<path d="M409,740.500H422M409,755.500H422" stroke="#fff"/><rect x="409.500" y="743.500" width="12" height="9" fill="none" stroke="#fff"/><path d="M424,740.500V743M424,746V750M424,753V755.500" stroke="#fff" stroke-width="2"/>
<!-- active underlines -->
<g fill="#76b9ed"><rect x="447" y="766" width="40" height="2"/><rect x="496" y="766" width="40" height="2"/><rect x="741" y="766" width="40" height="2"/><rect x="790" y="766" width="40" height="2"/></g>
<rect x="835" y="728" width="48" height="40" fill="#5c4a4a"/><rect x="835" y="766" width="48" height="2" fill="#76b9ed"/>
<!-- explorer -->
<path d="M456,739H465L468,742H478V757H456z" fill="#f8dc80"/><path d="M456,744H478V757H456z" fill="#fbe9a6"/>
<path d="M462,757V751H472V757H469V754H465V757z" fill="#3fa9e6"/><rect x="456" y="755" width="22" height="2" fill="#e3b54c"/>
<!-- edge -->
<path d="M508,749.500C508,738 525,735 525,750.500H511.500C512,757.500 520,759 525.500,755.500" fill="none" stroke="#0a78d8" stroke-width="4.500"/>
<!-- store -->
<path d="M553,743H576V756Q576,759 573,759H556Q553,759 553,756z" fill="#fff"/>
<path d="M560,743V739Q560,736 564.500,736Q569,736 569,739V743" fill="none" stroke="#eee" stroke-width="1.200"/>
<rect x="559" y="746" width="5" height="5" fill="#e8502a"/><rect x="565" y="746" width="5" height="5" fill="#7cb800"/><rect x="559" y="752" width="5" height="5" fill="#00a4ee"/><rect x="565" y="752" width="5" height="5" fill="#fbb900"/>
<!-- gift -->
<rect x="602" y="736" width="24" height="24" rx="3" fill="#fff"/>
<rect x="606" y="746" width="7" height="4" fill="#a50f0f"/><rect x="615" y="746" width="7" height="4" fill="#a50f0f"/><rect x="607" y="751" width="6" height="7" fill="#a50f0f"/><rect x="615" y="751" width="6" height="7" fill="#a50f0f"/>
<path d="M614,745Q607,744 608,739Q611,737 614,745Q617,737 620,739Q621,744 614,745z" fill="none" stroke="#a50f0f" stroke-width="1.600"/>
<!-- mail -->
<path d="M651,746L663,738L675,746V757H651z" fill="#fff"/><path d="M651,746L672,748L660,752z" fill="#1c0a22"/>
<!-- skype -->
<circle cx="712" cy="747" r="10.500" fill="#0e9ce4"/>
<text x="707" y="753" style="font-size:16px;font-weight:bold;fill:#fff">S</text>
<circle cx="724.500" cy="755" r="7.800" fill="#333" stroke="#8a8a8a"/>
<text x="721" y="759.500" style="font-size:11.500px;font-weight:bold;fill:#fff">2</text>
<!-- brackets -->
<rect x="749" y="736" width="24" height="24" rx="3" fill="#2c96d8"/>
<rect x="754" y="741" width="14" height="14" fill="#17324a"/>
<path d="M760,743.500H756.500V752.500H760M762.500,743.500H766V752.500H762.500" fill="none" stroke="#fff" stroke-width="2"/>
<!-- git -->
<path d="M810,736.500L815,741.500L810,746.500L805,741.500z" fill="#e05252"/>
<path d="M802,743L807,748L802,753L797.500,748z" fill="#5a8ee6"/>
<path d="M818,743L822.500,748L818,753L813,748z" fill="#5fb85a"/>
<path d="M810,749.500L815,754.500L810,759.500L805,754.500z" fill="#f0cf60"/>
<path d="M809,744L813,749" stroke="#222" stroke-width="1.500"/>
<!-- fusion -->
<rect x="847" y="736" width="24" height="24" fill="#f4dcc0"/>
<text x="852" y="755" style="font-size:21px;font-weight:bold;fill:#e6942c">F</text>
<!-- tray -->
<g fill="none" stroke="#f0f0f0" stroke-width="1.100">
<circle cx="1066.500" cy="744" r="3"/><path d="M1060,752Q1061,747 1066,748M1067,748Q1071,748 1072,751"/><circle cx="1060.500" cy="749" r="2.500"/><path d="M1056.500,757Q1056.500,752.500 1060.500,752.500Q1063.500,752.500 1064,756"/>
<path d="M1093.500,751.500L1099,746L1104.500,751.500" stroke-width="1.300"/>
<rect x="1140.500" y="744.500" width="14" height="8"/><path d="M1156,747V750"/>
<path d="M1166.500,755Q1168,747 1178,744M1169.500,755Q1171,750 1178,747M1172.500,755Q1173,752.500 1177,750.500" stroke-width=".9"/>
<path d="M1187.500,746H1190.500L1194,742.500V754L1190.500,750.500H1187.500zM1196.500,745.500Q1198,748 1196.500,751M1198.500,743.500Q1201,748 1198.500,753"/>
<path d="M1201.500,742Q1205,748 1201.500,755" stroke="#666"/>
</g>
<rect x="1142" y="746" width="4" height="5" fill="#f0f0f0"/>
<circle cx="1176.500" cy="754.500" r="1.400" fill="#f0f0f0"/>
<path d="M1115,752Q1115,747 1120,748Q1122,743.500 1126,746Q1131,746 1131,752Q1128,754 1120,754Q1116,754 1115,752z" fill="#e8e8e8"/>
<text x="1214" y="753" style="font-size:12px;fill:#e8e8e8" textLength="21" lengthAdjust="spacingAndGlyphs">FRA</text>
<text x="1264" y="743" style="font-size:11.500px;fill:#e8e8e8" textLength="27" lengthAdjust="spacingAndGlyphs">00:40</text>
<text x="1250" y="762" style="font-size:11.500px;fill:#e8e8e8" textLength="57" lengthAdjust="spacingAndGlyphs">11/02/2020</text>
<path d="M1325,740H1341V752H1332L1328,756V752H1325z" fill="#f4f4f4"/><path d="M1327.500,743.500H1338.500M1327.500,746.500H1338.500M1327.500,749.500H1335" stroke="#444"/>
<circle cx="1340" cy="755" r="7.800" fill="#333" stroke="#8a8a8a"/>
<text x="1336.500" y="759.500" style="font-size:11.500px;font-weight:bold;fill:#fff">3</text>
<path d="M1361.500,728V768" stroke="#6a5a5a"/>
</svg>
</body></html>
